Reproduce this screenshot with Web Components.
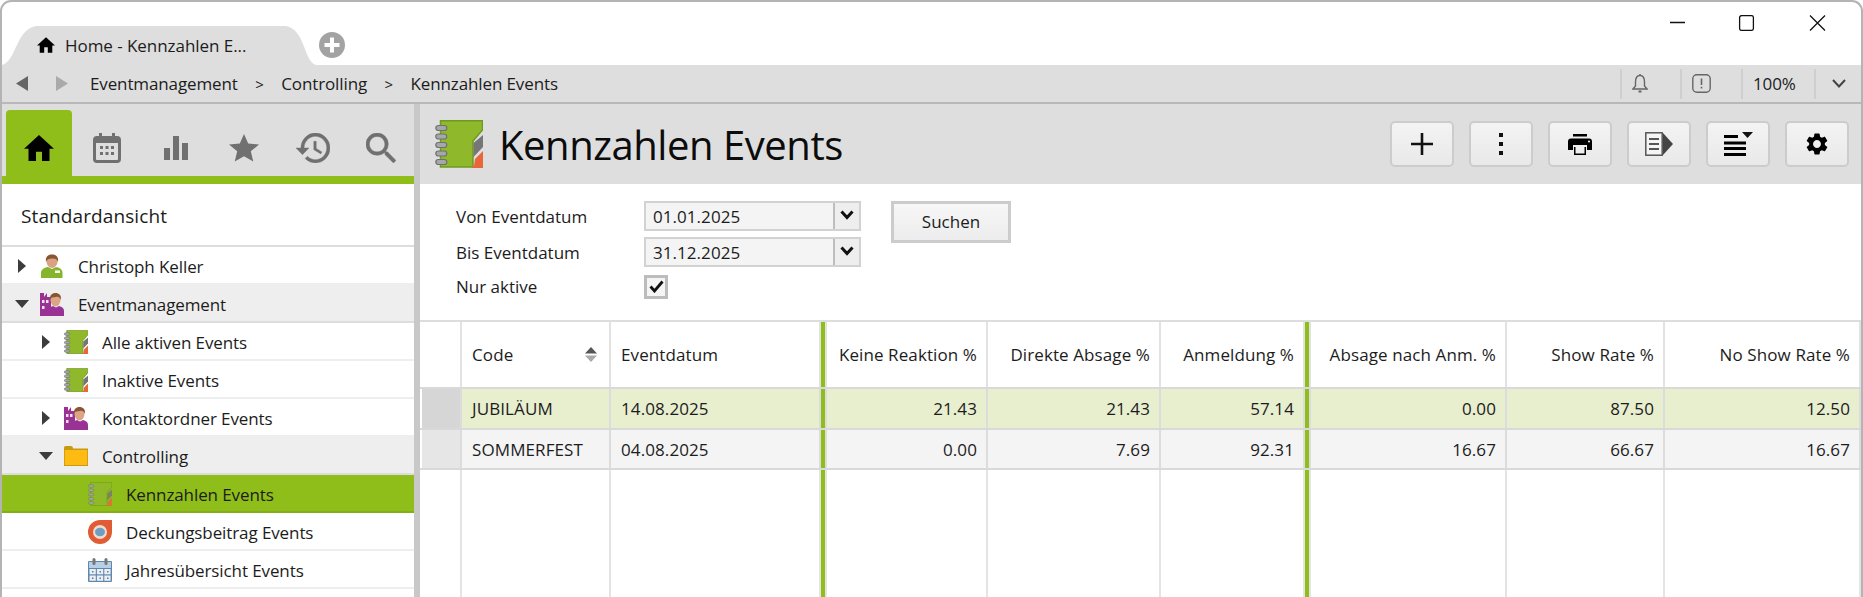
<!DOCTYPE html>
<html lang="de"><head><meta charset="utf-8"><title>Kennzahlen Events</title>
<style>
html,body{margin:0;padding:0;background:#fff;overflow:hidden}
body{font-family:"Open Sans","Noto Sans",sans-serif;color:#1c1c1c}
</style></head><body>
<app-window>
  <win-titlebar slot="top">Home - Kennzahlen E...</win-titlebar>
  <nav-bar slot="top">
    <span slot="crumb">Eventmanagement</span><span slot="crumb">Controlling</span><span slot="crumb">Kennzahlen Events</span>
  </nav-bar>
  <side-nav slot="side">
    <tree-row level="0" arrow="right" icon="person">Christoph Keller</tree-row>
    <tree-row level="0" arrow="down" icon="org" shade>Eventmanagement</tree-row>
    <tree-row level="1" arrow="right" icon="book">Alle aktiven Events</tree-row>
    <tree-row level="1" icon="book">Inaktive Events</tree-row>
    <tree-row level="1" arrow="right" icon="org">Kontaktordner Events</tree-row>
    <tree-row level="1" arrow="down" icon="folder" shade>Controlling</tree-row>
    <tree-row level="2" icon="book" active>Kennzahlen Events</tree-row>
    <tree-row level="2" icon="target">Deckungsbeitrag Events</tree-row>
    <tree-row level="2" icon="cal">Jahresübersicht Events</tree-row>
  </side-nav>
  <main-view slot="main">
    <title-band>Kennzahlen Events</title-band>
    <filter-form></filter-form>
    <data-grid>
      <grid-row kind="head">
        <grid-cell hdr></grid-cell><grid-cell sort>Code</grid-cell><grid-cell>Eventdatum</grid-cell><grid-cell bar></grid-cell>
        <grid-cell num>Keine Reaktion %</grid-cell><grid-cell num>Direkte Absage %</grid-cell><grid-cell num>Anmeldung %</grid-cell><grid-cell bar></grid-cell>
        <grid-cell num>Absage nach Anm. %</grid-cell><grid-cell num>Show Rate %</grid-cell><grid-cell num>No Show Rate %</grid-cell>
      </grid-row>
      <grid-row kind="sel">
        <grid-cell hdr></grid-cell><grid-cell>JUBILÄUM</grid-cell><grid-cell>14.08.2025</grid-cell><grid-cell bar></grid-cell>
        <grid-cell num>21.43</grid-cell><grid-cell num>21.43</grid-cell><grid-cell num>57.14</grid-cell><grid-cell bar></grid-cell>
        <grid-cell num>0.00</grid-cell><grid-cell num>87.50</grid-cell><grid-cell num>12.50</grid-cell>
      </grid-row>
      <grid-row kind="alt">
        <grid-cell hdr></grid-cell><grid-cell>SOMMERFEST</grid-cell><grid-cell>04.08.2025</grid-cell><grid-cell bar></grid-cell>
        <grid-cell num>0.00</grid-cell><grid-cell num>7.69</grid-cell><grid-cell num>92.31</grid-cell><grid-cell bar></grid-cell>
        <grid-cell num>16.67</grid-cell><grid-cell num>66.67</grid-cell><grid-cell num>16.67</grid-cell>
      </grid-row>
      <grid-row kind="empty">
        <grid-cell hdr></grid-cell><grid-cell></grid-cell><grid-cell></grid-cell><grid-cell bar></grid-cell>
        <grid-cell></grid-cell><grid-cell></grid-cell><grid-cell></grid-cell><grid-cell bar></grid-cell>
        <grid-cell></grid-cell><grid-cell></grid-cell><grid-cell></grid-cell>
      </grid-row>
    </data-grid>
  </main-view>
</app-window>
<script>
const ICONS={
book:`<svg viewBox="0 0 48 48" width="100%" height="100%"><path d="M5.5.8H47.5V10L38 21V47H5.500z" fill="#8fb92b" stroke="#6f9a1f" stroke-width="1.500"/><path d="M38.500 23L48 15V27L38.500 37z" fill="#767676"/><path d="M40 39L48 31V48H37V46H39z" fill="#e8673a"/><g fill="#a6a6ac" stroke="#6f7072" stroke-width="1.200"><rect x=".8" y="5.500" width="11" height="5" rx="2.500"/><rect x=".8" y="14" width="11" height="5" rx="2.500"/><rect x=".8" y="22.500" width="11" height="5" rx="2.500"/><rect x=".8" y="31" width="11" height="5" rx="2.500"/><rect x=".8" y="39.500" width="11" height="5" rx="2.500"/></g></svg>`,
person:`<svg viewBox="0 0 24 24" width="100%" height="100%"><path d="M1 24V19C1 15 5 13.500 8 13L12 15L16 13C19 13.500 22.500 15 22.500 19V24z" fill="#84b52a"/><rect x="15" y="16.500" width="5" height="2.500" fill="#fff"/><ellipse cx="12" cy="7.500" rx="5.500" ry="6.500" fill="#d9a383"/><path d="M6 8C5 2 9 .5 12 .5S19 2 18 8C17 5 15 4 12 4.500S7 5 6 8z" fill="#8a5535"/></svg>`,
org:`<svg viewBox="0 0 24 24" width="100%" height="100%"><path d="M0 24V1H4V5L7 1V5H11V24z" fill="#9a3296"/><path d="M7 24V19C7 16 10 15 13 14L16 15.500L19 14C22 15 24 16 24 19V24z" fill="#9a3296"/><ellipse cx="15.500" cy="8" rx="5" ry="6.500" fill="#dca685"/><path d="M10 8C9.500 3 12 1 15.500 1S21.500 3 21 8C20 5 18 4.500 15.500 5S11 5 10 8z" fill="#8a5535"/><g fill="#f2e4f2"><rect x="2" y="8" width="2.500" height="3"/><rect x="6" y="8" width="2.500" height="3"/><rect x="2" y="14" width="2.500" height="3"/></g></svg>`,
folder:`<svg viewBox="0 0 24 20" width="100%" height="100%"><path d="M0 3V1.500Q0 0 1.500 0H7Q8.500 0 9 1.500V3z" fill="#c99a10"/><rect y="2.500" width="24" height="17.500" fill="#c99a10"/><rect x=".8" y="4" width="22.400" height="15" fill="#fdbb14"/></svg>`,
target:`<svg viewBox="0 0 24 24" width="100%" height="100%"><path d="M12 0H24V12A12 12 0 1 1 12 0z" fill="#e15c33"/><circle cx="12" cy="12" r="7" fill="#f4d9cf"/><ellipse cx="12" cy="12" rx="5" ry="4.200" fill="#6f9fc0"/></svg>`,
cal:`<svg viewBox="0 0 24 24" width="100%" height="100%"><rect y="3" width="24" height="21" rx="1" fill="#5f87ad"/><rect x="1" y="4" width="22" height="6" fill="#b7d0e6"/><g fill="#e8eff6"><rect x="1.500" y="11" width="6.300" height="5.300"/><rect x="8.900" y="11" width="6.300" height="5.300"/><rect x="16.300" y="11" width="6.300" height="5.300"/><rect x="1.500" y="17.500" width="6.300" height="5.300"/><rect x="8.900" y="17.500" width="6.300" height="5.300"/><rect x="16.300" y="17.500" width="6.300" height="5.300"/></g><g fill="#777"><rect x="4.500" y="0" width="3" height="7" rx="1.500"/><rect x="16.500" y="0" width="3" height="7" rx="1.500"/><rect x="4" y="13" width="1.500" height="1.500"/><rect x="11.500" y="13" width="1.500" height="1.500"/><rect x="19" y="13" width="1.500" height="1.500"/><rect x="4" y="19.500" width="1.500" height="1.500"/><rect x="11.500" y="19.500" width="1.500" height="1.500"/><rect x="19" y="19.500" width="1.500" height="1.500"/></g></svg>`
};
const TAB={
home:['#000',30,26,'2 3 20 17','M10 20v-6h4v6h5v-8h3L12 3 2 12h3v8z'],
calendar:['#707070',28,30,'0 0 28 30','M6 0h3v3h10V0h3v3h2a4 4 0 0 1 4 4v19a4 4 0 0 1-4 4H4a4 4 0 0 1-4-4V7a4 4 0 0 1 4-4h2zM3 10v16a1 1 0 0 0 1 1h20a1 1 0 0 0 1-1V10zM7 13h3v3H7zM12.500 13h3v3h-3zM18 13h3v3h-3zM7 19h3v3H7zM12.500 19h3v3h-3zM18 19h3v3h-3z'],
bars:['#707070',24,24,'0 0 24 24','M0 12h6v12H0zM9 0h6v24H9zM18 7h6v17h-6z'],
star:['#707070',30,28,'2 2 20 19.300','M12 17.270L18.180 21l-1.640-7.030L22 9.240l-7.190-.61L12 2 9.190 8.630 2 9.240l5.460 4.730L5.820 21z'],
history:['#707070',34,30,'1 3 21 18','M13 3a9 9 0 0 0-9 9H1l3.890 3.890.07.14L9 12H6c0-3.870 3.130-7 7-7s7 3.130 7 7-3.130 7-7 7c-1.930 0-3.680-.79-4.940-2.060l-1.420 1.420A8.954 8.954 0 0 0 13 21a9 9 0 0 0 0-18zm-1 5v5l4.280 2.540.72-1.210-3.500-2.080V8H12z'],
search:['#707070',30,30,'3 3 17.500 17.500','M15.500 14h-.79l-.28-.27A6.471 6.471 0 0 0 16 9.500 6.500 6.500 0 1 0 9.500 16c1.610 0 3.090-.59 4.230-1.570l.27.28v.79l5 4.990L20.490 19l-4.990-5zm-6 0C7.010 14 5 11.990 5 9.500S7.010 5 9.500 5 14 7.010 14 9.500 11.990 14 9.500 14z']
};
function tabSvg(k){const t=TAB[k];return `<svg width="${t[1]}" height="${t[2]}" viewBox="${t[3]}" preserveAspectRatio="none"><path d="${t[4]}" fill="${t[0]}" fill-rule="evenodd" stroke="${t[0]}" stroke-width="${k==='search'||k==='history'?.25:0}"/></svg>`}
function def(name,html,init){customElements.define(name,class extends HTMLElement{
  connectedCallback(){if(this.shadowRoot)return;const r=this.attachShadow({mode:'open'});r.innerHTML=typeof html==='function'?html(this):html;if(init)init(this,r)}
})}
def('app-window',`<style>
:host{display:flex;flex-direction:column;box-sizing:border-box;height:597px;width:1863px;border:2px solid #b4b4b4;border-bottom:0;border-radius:11px 11px 0 0;overflow:hidden;background:#fff}
.body{flex:1;min-height:0;display:flex}
.split{width:6px;background:#c8c8c8;flex:none}
</style><slot name="top"></slot><div class="body"><slot name="side"></slot><div class="split"></div><slot name="main"></slot></div>`);
def('win-titlebar',`<style>
:host{display:flex;height:63px;flex:none;align-items:flex-start;font-size:17px;letter-spacing:-.05px;color:#1c1c1c}
.tab{margin-top:24px;width:314px;height:39px;background:#dedede;display:flex;align-items:center;box-sizing:border-box;padding:0 0 1px 35px;clip-path:path('M0 39C14 36 14 3 34 0H284C303 3 302 36 314 39Z');white-space:nowrap}
.tab svg{margin-right:10px;flex:none}
.plus{margin:30px 0 0 3px;flex:none}
.ctl{margin-left:auto;display:flex;align-self:flex-start;margin-top:13px}
.ctl svg{display:block}
</style>
<div class="tab"><svg width="18" height="16" viewBox="2 3 20 17"><path d="M10 20v-6h4v6h5v-8h3L12 3 2 12h3v8z" fill="#000"/></svg><span><slot></slot></span></div>
<svg class="plus" width="26" height="26" viewBox="0 0 26 26"><circle cx="13" cy="13" r="13" fill="#a3a3a3"/><path d="M11 5.500h4V11h5.500v4H15v5.500h-4V15H5.500v-4H11z" fill="#fff"/></svg>
<div class="ctl"><svg width="190" height="16" viewBox="0 0 190 16" style="margin-right:1px" fill="none" stroke="#111" stroke-width="1.300"><path d="M0 7.500H15"/><rect x="69.600" y=".6" width="13.800" height="14.800" rx="2"/><path d="M140 .5L155 15.500M155 .5L140 15.500"/></svg></div>`);
def('nav-bar',`<style>
:host{display:flex;height:37px;flex:none;background:#dedede;border-bottom:2px solid #b8b8b8;align-items:center;font-size:17px;color:#1c1c1c;padding-left:14px}
.a{flex:none;margin-right:28px}.a2{margin-right:22px}
.crumbs{display:flex;gap:17.5px;align-items:center;letter-spacing:-.12px}
::slotted(span){white-space:nowrap}
.r{margin-left:auto;display:flex;height:30px;align-items:center}
.c{box-sizing:border-box;height:30px;border-left:2px solid #cfcfcf;padding-left:10px;display:flex;align-items:center}
</style>
<svg class="a" width="12" height="15" viewBox="0 0 12 15"><path d="M12 0V15L0 7.500z" fill="#666"/></svg>
<svg class="a a2" width="12" height="15" viewBox="0 0 12 15"><path d="M0 0V15L12 7.500z" fill="#aaa"/></svg>
<div class="crumbs"><slot name="crumb"></slot></div>
<div class="r">
<div class="c" style="width:60px"><svg width="16" height="19" viewBox="0 0 16 19" fill="none" stroke="#666" stroke-width="1.400"><path d="M8 1.500C4.500 1.500 3.500 4.500 3.500 8V12L1 15H15L12.500 12V8C12.500 4.500 11.500 1.500 8 1.500z"/><path d="M6.500 17.500h3" stroke-width="2"/><path d="M8 0v1.500"/></svg></div>
<div class="c" style="width:61px"><svg width="19" height="19" viewBox="0 0 19 19" fill="none" stroke="#666" stroke-width="1.400"><rect x=".8" y=".8" width="17.400" height="17.400" rx="4"/><path d="M9.500 4.500v6.500M9.500 12.800v1.800" stroke-width="1.600"/></svg></div>
<div class="c" style="width:73px;letter-spacing:-.1px">100%</div>
<div class="c" style="width:47px;padding-left:16px"><svg width="14" height="9" viewBox="0 0 14 9" fill="none" stroke="#444" stroke-width="2"><path d="M1 1L7 7.500L13 1"/></svg></div>
</div>`,(h,r)=>{
  const items=[...h.querySelectorAll('[slot=crumb]')];
  items.slice(0,-1).forEach(s=>{s.insertAdjacentHTML('afterend','<span slot="crumb" style="font-size:15px">&gt;</span>')});
});
def('side-nav',`<style>
:host{display:flex;flex-direction:column;width:412px;flex:none;background:#fff;overflow:hidden}
.tabs{display:flex;height:72px;box-sizing:border-box;padding:6px 0 0 4px;gap:2.400px;background:#dedede;flex:none}
.t{width:66px;height:66px;display:flex;justify-content:center;align-items:flex-start;box-sizing:border-box;padding-top:23px;flex:none;border-radius:4px 4px 0 0}
.t svg{display:block}.t.on{background:#8fbe1a;padding-top:25px}
.strip{height:8px;background:#8fbe1a;flex:none}
.head{height:63px;flex:none;box-sizing:border-box;border-bottom:2px solid #ddd;display:flex;align-items:center;padding:3px 0 0 19px;font-size:19px;color:#1c1c1c;letter-spacing:.1px}
</style><div class="tabs">
<div class="t on">${tabSvg('home')}</div><div class="t">${tabSvg('calendar')}</div><div class="t" style="padding-top:26px">${tabSvg('bars')}</div><div class="t" style="padding-top:24px">${tabSvg('star')}</div><div class="t">${tabSvg('history')}</div><div class="t">${tabSvg('search')}</div>
</div><div class="strip"></div><div class="head">Standardansicht</div><slot></slot>`);
def('tree-row',h=>{
  const lvl=+h.getAttribute('level')||0,arrow=h.getAttribute('arrow'),ic=h.getAttribute('icon');
  const a=arrow==='right'?'<svg width="8" height="14" viewBox="0 0 8 14"><path d="M0 0L8 7L0 14z" fill="#3c3c3c"/></svg>':arrow==='down'?'<svg width="14" height="8" viewBox="0 0 14 8"><path d="M0 0H14L7 8z" fill="#3c3c3c"/></svg>':'';
  return `<style>
:host{display:flex;box-sizing:border-box;height:38px;flex:none;align-items:center;border-bottom:2px solid #eee;font-size:17px;color:#1c1c1c;padding:2px 0 0 ${lvl*24+12}px;letter-spacing:-.1px;white-space:nowrap}
:host([shade]){background:#eee;border-bottom-color:#ddd}
:host([active]){background:#8fbe1a;border-bottom-color:#84ad17}
.a{width:16px;flex:none;display:flex;justify-content:center;align-items:center;margin-right:10px}
.i{width:24px;height:${ic==='folder'?20:24}px;flex:none;margin-right:14px}
.t{padding-top:1px}
:host([active]) .i{opacity:.8}
</style><span class="a">${a}</span><span class="i">${ICONS[ic]}</span><span class="t"><slot></slot></span>`});
def('main-view',`<style>:host{display:flex;flex-direction:column;flex:1;min-width:0}</style><slot></slot>`);
def('tool-button',`<style>:host{display:flex;box-sizing:border-box;width:64px;height:46px;flex:none;align-items:center;justify-content:center;border:2px solid #ccc;border-radius:5px;background:linear-gradient(#f3f3f3,#e9e9e9)}</style><slot></slot>`);
def('title-band',`<style>
:host{display:flex;height:80px;flex:none;background:#dedede;align-items:center;padding:0 12px 0 15px;box-sizing:border-box}
.ic{width:48px;height:48px;flex:none;margin-right:16px}
h1{margin:0;font-size:40px;font-weight:400;color:#0c0c0c;letter-spacing:-.45px;white-space:nowrap}
.tools{margin-left:auto;display:flex;gap:15px}
svg{display:block}
</style><span class="ic">${ICONS.book}</span><h1><slot></slot></h1>
<div class="tools">
<tool-button><svg width="22" height="22" viewBox="0 0 22 22"><path d="M9.700 0h2.600v9.700H22v2.600h-9.700V22H9.700v-9.700H0V9.700h9.700z" fill="#111"/></svg></tool-button>
<tool-button><svg width="4" height="22" viewBox="0 0 4 22"><path d="M0 0h4v4H0zM0 9h4v4H0zM0 18h4v4H0z" fill="#111"/></svg></tool-button>
<tool-button><svg width="24" height="21" viewBox="0 0 24 21"><path d="M5 0h14v2.500H5zM3 4.500h18a3 3 0 0 1 3 3v8.500h-5V11H5v5H0V7.500a3 3 0 0 1 3-3zM6 13h12v8H6z" fill="#000" fill-rule="evenodd"/><circle cx="21" cy="7.500" r="1" fill="#fff"/><rect x="7.500" y="13" width="9" height="6.500" fill="#f0f0f0"/></svg></tool-button>
<tool-button><svg width="28" height="24" viewBox="0 0 28 24"><rect x=".8" y=".8" width="16.400" height="22.400" fill="#f5f5f5" stroke="#555" stroke-width="1.500"/><path d="M4 6h10v2H4zM4 11h10v2H4zM4 16h10v2H4z" fill="#555"/><path d="M18 1L28 12L18 23z" fill="#444"/></svg></tool-button>
<tool-button><svg width="29" height="24" viewBox="0 0 29 24"><path d="M0 3h14v3H0zM0 9.500h22v3H0zM0 15h22v3H0zM0 21h22v3H0z" fill="#000"/><path d="M18 0H29L23.500 6z" fill="#111"/></svg></tool-button>
<tool-button><svg width="22" height="22" viewBox="2 2 20 20"><path fill-rule="evenodd" d="M19.140 12.940c.04-.3.060-.61.060-.94 0-.32-.02-.64-.07-.94l2.030-1.580a.49.49 0 0 0 .12-.61l-1.920-3.320a.488.488 0 0 0-.59-.22l-2.390.96c-.5-.38-1.030-.7-1.620-.94l-.36-2.540a.484.484 0 0 0-.48-.41h-3.840c-.24 0-.43.17-.47.41l-.36 2.540c-.59.24-1.130.57-1.620.94l-2.390-.96c-.22-.08-.47 0-.59.22L2.740 8.870c-.12.21-.08.47.12.61l2.030 1.580c-.05.3-.09.63-.09.94s.02.64.07.94l-2.030 1.580a.49.49 0 0 0-.12.61l1.920 3.320c.12.22.37.29.59.22l2.390-.96c.5.38 1.030.7 1.620.94l.36 2.540c.05.24.24.41.48.41h3.840c.24 0 .44-.17.47-.41l.36-2.540c.59-.24 1.130-.56 1.620-.94l2.390.96c.22.08.47 0 .59-.22l1.920-3.320c.12-.22.07-.47-.12-.61l-2.010-1.580zM12 15.600c-1.980 0-3.600-1.620-3.600-3.600s1.620-3.600 3.600-3.600 3.600 1.620 3.600 3.600-1.620 3.600-3.600 3.600z" fill="#000"/></svg></tool-button>
</div>`);
def('date-box',`<style>
:host{display:flex;box-sizing:border-box;height:30px;border:2px solid #d2d2d2;background:#f4f4f4;align-items:center;font-size:17px;letter-spacing:.05px;color:#1c1c1c;padding-left:7px}
.v{flex:1}
.b{box-sizing:border-box;width:26px;height:26px;border-left:2px solid #bdbdbd;background:#eee;display:flex;justify-content:center;padding-top:7px;flex:none}
</style><span class="v"><slot></slot></span><span class="b"><svg width="14" height="10" viewBox="0 0 14 10" fill="none" stroke="#111" stroke-width="3"><path d="M1.500 1.500L7 7.500L12.500 1.500"/></svg></span>`);
def('filter-form',`<style>
:host{display:grid;box-sizing:border-box;height:136px;flex:none;grid-template-columns:188px 217px 150px;grid-template-rows:30px 30px 24px;row-gap:6px;padding:17px 0 0 36px;font-size:17px;color:#1c1c1c;align-items:center}
.chk{box-sizing:border-box;width:24px;height:24px;border:3px solid #bcbcbc;background:#f5f5f5;display:flex;align-items:center;justify-content:center;margin-top:3px}
.l3{margin-top:3px}
button{all:unset;box-sizing:border-box;grid-column:3;grid-row:1/3;align-self:start;margin-left:30px;width:120px;height:42px;border:3px solid #ccc;background:linear-gradient(#f7f7f7,#ececec);text-align:center;font:inherit;color:#1c1c1c;line-height:36px}
</style>
<span>Von Eventdatum</span><date-box>01.01.2025</date-box><button>Suchen</button>
<span>Bis Eventdatum</span><date-box>31.12.2025</date-box>
<span class="l3">Nur aktive</span><span class="chk"><svg width="15" height="13" viewBox="0 0 15 13" fill="none" stroke="#111" stroke-width="2.800"><path d="M1.500 6.500L5.500 11L13.500 1.500"/></svg></span>`);
def('data-grid',`<style>
:host{display:flex;flex-direction:column;flex:1;min-height:0;border-top:2px solid #ddd;font-size:17px;color:#1c1c1c;letter-spacing:.1px;
--cols:42px 149px 210px 6px 161px 173px 144px 6px 196px 158px 196px}
</style><slot></slot>`);
def('grid-row',`<style>
:host{display:grid;grid-template-columns:var(--cols);flex:none;box-sizing:border-box;border-bottom:2px solid #d9d9d9;--sep:#dcdcdc}
:host([kind=head]){height:67px;background:#fff;--hdr:#fff;--sep:#e2e2e2}
:host([kind=sel]){height:41px;background:#e8efcf;--hdr:#d6d6d6}
:host([kind=alt]){height:40px;background:#f4f4f4;--hdr:#e6e6e6}
:host([kind=empty]){flex:1;border-bottom:0;background:#fff;--hdr:#fff;--sep:#e4e4e4}
</style><slot></slot>`);
def('grid-cell',h=>`<style>
:host{display:flex;align-items:center;box-sizing:border-box;border-right:2px solid var(--sep);padding:0 9px 0 10px;min-width:0;white-space:nowrap}
:host([num]){justify-content:flex-end}
:host([hdr]){background:var(--hdr);border-left:2px solid #fff}
:host([bar]){background:#8fbe1a;padding:0}
:host([sort]){justify-content:space-between;padding-right:12px}
svg{display:block}
</style><span><slot></slot></span>${h.hasAttribute('sort')?'<svg width="12" height="15" viewBox="0 0 12 15"><path d="M6 0L12 6.500H0z" fill="#555"/><path d="M0 8.500H12L6 15z" fill="#aaa"/></svg>':''}`);
</script>
</body></html>
